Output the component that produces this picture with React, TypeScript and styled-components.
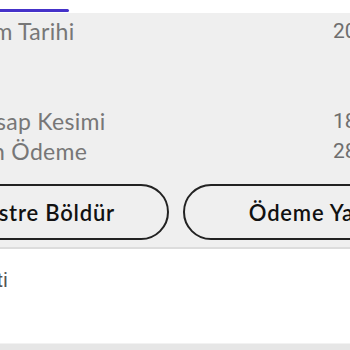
import React from "react";
import styled, { createGlobalStyle } from "styled-components";

const GlobalStyle = createGlobalStyle`
  html, body {
    margin: 0;
    padding: 0;
    background: #ffffff;
    overflow: hidden;
  }
  body {
    font-family: "Lato", "Liberation Sans", sans-serif;
  }
`;

const Page = styled.div`
  width: 546px;
  margin-left: -97px;
  display: flex;
  flex-direction: column;
`;

const TabBar = styled.div`
  height: 13px;
  background: #ffffff;
  display: flex;
  align-items: flex-end;
  padding-bottom: 1px;
  box-sizing: border-box;
`;

const TabIndicator = styled.div`
  width: 166px;
  height: 3px;
  background: #4532c9;
  border-radius: 0 2px 2px 0;
`;

const Summary = styled.section`
  background: #efefef;
  padding: 3px 16px 7px;
  border-bottom: 2px solid #dcdcdc;
  display: flex;
  flex-direction: column;
`;

const InfoGroup = styled.div<{ $gap?: number }>`
  display: flex;
  flex-direction: column;
  margin-top: ${(p) => p.$gap ?? 0}px;
`;

const InfoRow = styled.div`
  display: grid;
  grid-template-columns: 367px auto;
  padding-left: 47px;
  height: 30px;
  align-items: center;
`;

const Label = styled.span`
  font-family: "Lato", sans-serif;
  font-size: 23px;
  letter-spacing: 0.3px;
  line-height: 30px;
  color: #777777;
  white-space: nowrap;
`;

const Value = styled.span`
  font-family: "Roboto", sans-serif;
  font-size: 21px;
  line-height: 30px;
  color: #6e6e6e;
  white-space: nowrap;
`;

const Actions = styled.div`
  display: grid;
  grid-template-columns: 1fr 1fr;
  gap: 14px;
  margin-top: 18px;
`;

const ActionButton = styled.button`
  height: 56px;
  border: 2px solid #222222;
  border-radius: 28px;
  background: transparent;
  font-family: "Lato", sans-serif;
  font-size: 22px;
  font-weight: 600;
  letter-spacing: 0.8px;
  color: #111111;
  display: flex;
  align-items: center;
  justify-content: center;
  padding: 0;
  white-space: nowrap;
`;

const Section = styled.section`
  background: #ffffff;
  height: 95px;
  padding: 19px 0 0 0;
  box-sizing: border-box;
  border-bottom: 1px solid #f2f2f2;
`;

const SectionTitle = styled.h2`
  margin: 0 0 0 -3px;
  font-family: "Roboto", sans-serif;
  font-weight: 400;
  font-size: 20px;
  line-height: 24px;
  color: #555555;
`;

const Footer = styled.div`
  height: 20px;
  background: #e6e6e6;
`;

export default function App() {
  return (
    <>
      <GlobalStyle />
      <Page>
        <TabBar>
          <TabIndicator />
        </TabBar>
        <Summary>
          <InfoGroup>
            <InfoRow>
              <Label>Alım Tarihi</Label>
              <Value>20.06.2024</Value>
            </InfoRow>
          </InfoGroup>
          <InfoGroup $gap={60}>
            <InfoRow>
              <Label>Hesap Kesimi</Label>
              <Value>18.06.2024</Value>
            </InfoRow>
            <InfoRow>
              <Label>Son Ödeme</Label>
              <Value>28.06.2024</Value>
            </InfoRow>
          </InfoGroup>
          <Actions>
            <ActionButton>Ekstre Böldür</ActionButton>
            <ActionButton>Ödeme Yap</ActionButton>
          </Actions>
        </Summary>
        <Section>
          <SectionTitle>Hesap Özeti</SectionTitle>
        </Section>
        <Footer />
      </Page>
    </>
  );
}
